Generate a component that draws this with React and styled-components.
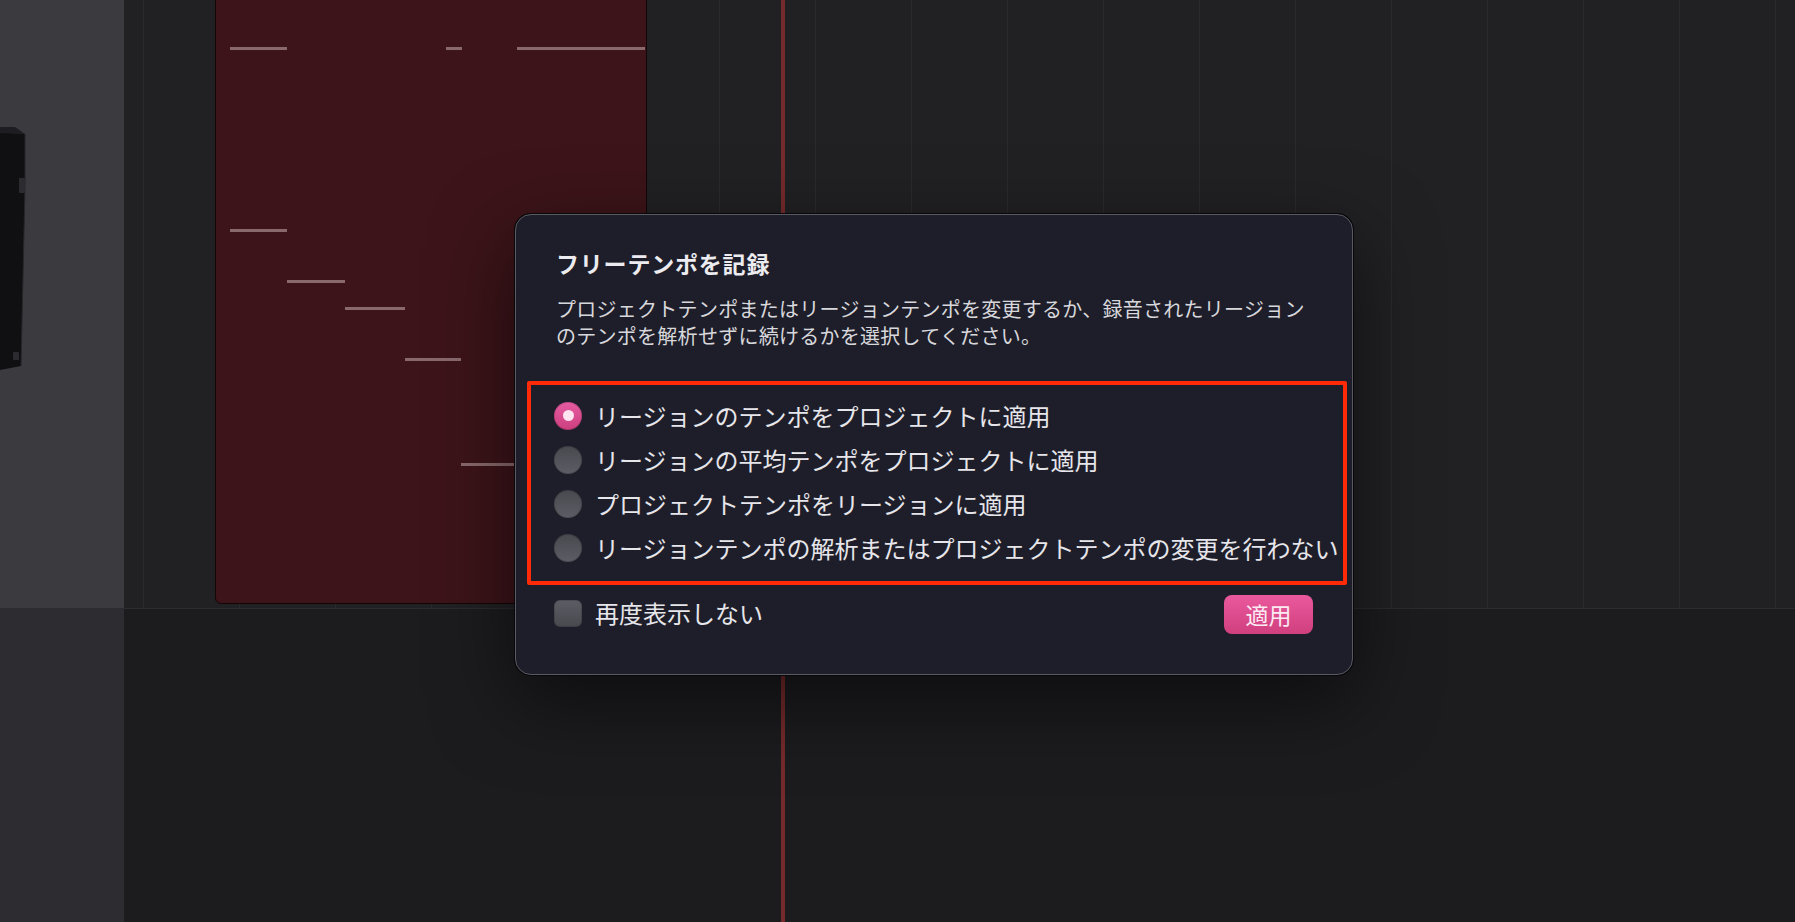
import React from 'react';
import styled, { createGlobalStyle } from 'styled-components';

const GlobalStyle = createGlobalStyle`
  html, body {
    margin: 0;
    padding: 0;
    background: #1c1c20;
    overflow: hidden;
  }
  body {
    font-family: "Noto Sans CJK JP", "Noto Sans", sans-serif;
    -webkit-font-smoothing: antialiased;
  }
`;

const Page = styled.div`
  position: relative;
  display: grid;
  grid-template-rows: 608px 1fr;
  width: 100vw;
  height: 100vh;
  overflow: hidden;
`;

const TrackRow = styled.div`
  display: grid;
  grid-template-columns: 124px 1fr;
  min-height: 0;
`;

const LowerRow = styled.div`
  display: grid;
  grid-template-columns: 124px 1fr;
  border-top: 1px solid #2b2b30;
`;

const Sidebar = styled.div`
  display: flex;
  flex-direction: column;
  padding-top: ${p => (p.$lower ? 0 : 126)}px;
  background: ${p => (p.$lower ? '#2d2d31' : '#3b3a3f')};
  overflow: hidden;
`;

const Arrange = styled.div`
  position: relative;
  overflow: hidden;
  background-color: #212124;
  background-image: linear-gradient(to right, #2a2a2e 1px, transparent 1px);
  background-size: 96px 100%;
  background-position: 19px 0;
`;

const LowerLane = styled.div`
  background: #1c1c1f;
`;

const Region = styled.div`
  position: absolute;
  left: 91px;
  top: -8px;
  width: 432px;
  height: 612px;
  box-sizing: border-box;
  background: #3c1419;
  border: 1px solid #140607;
  border-radius: 0 0 6px 6px;
`;

const Note = styled.span`
  position: absolute;
  height: 3px;
  background: #8a696d;
`;

const Playhead = styled.div`
  position: absolute;
  left: 781px;
  top: 0;
  bottom: 0;
  width: 4px;
  background: #762a2b;
`;

const Dialog = styled.div`
  position: absolute;
  left: 515px;
  top: 214px;
  width: 838px;
  height: 461px;
  box-sizing: border-box;
  display: flex;
  flex-direction: column;
  background: #1e1e2a;
  border: 1px solid #5a5a62;
  border-radius: 16px;
  box-shadow: 0 0 0 1px #08080a, 0 26px 80px rgba(0, 0, 0, 0.55);
  color: #e6e6ea;
`;

const Header = styled.div`
  padding: 33px 40px 0;
`;

const Title = styled.h2`
  margin: 0;
  font-size: 23px;
  line-height: 30px;
  font-weight: 700;
  letter-spacing: 0.8px;
  color: #ececf0;
`;

const Description = styled.p`
  margin: 17px 0 0;
  width: 762px;
  font-size: 20px;
  line-height: 27px;
  letter-spacing: 0.27px;
  color: #d8d8dc;
`;

const Choices = styled.div`
  margin: 32px 5px 0 11px;
  padding: 8px 0 12px 23px;
  border: 4px solid #ff2a08;
  border-radius: 2px;
  display: flex;
  flex-direction: column;
`;

const Choice = styled.label`
  display: flex;
  align-items: center;
  gap: 13px;
  height: 44px;
  font-size: 24px;
  color: #e6e6ea;
  white-space: nowrap;
`;

const Radio = styled.span`
  flex: none;
  display: flex;
  align-items: center;
  justify-content: center;
  width: 28px;
  height: 28px;
  margin-top: 1px;
  border-radius: 50%;
  background: ${p =>
    p.$on
      ? 'linear-gradient(#e65ca2, #cc3f7e)'
      : 'linear-gradient(#48484f, #5d5d65)'};
  box-shadow: inset 0 0 0 1px rgba(0, 0, 0, 0.15);

  &::after {
    content: '';
    display: ${p => (p.$on ? 'block' : 'none')};
    width: 11px;
    height: 11px;
    border-radius: 50%;
    background: #fde4f0;
  }
`;

const Footer = styled.div`
  margin-top: 8px;
  height: 40px;
  padding: 0 39px 0 38px;
  display: flex;
  align-items: center;
  justify-content: space-between;
`;

const CheckLabel = styled.label`
  display: flex;
  align-items: center;
  gap: 13px;
  font-size: 24px;
  line-height: 34px;
  color: #e6e6ea;
`;

const Checkbox = styled.span`
  width: 28px;
  height: 27px;
  margin-top: 1px;
  border-radius: 6px;
  background: linear-gradient(#5c5c64, #48484f);
  box-shadow: inset 0 0 0 1px rgba(0, 0, 0, 0.15);
`;

const ApplyButton = styled.button`
  width: 89px;
  height: 39px;
  margin-top: 3px;
  border: none;
  border-radius: 8px;
  background: linear-gradient(#ea599d, #d0407f);
  color: #fbeaf2;
  font-family: inherit;
  font-size: 23px;
  line-height: 39px;
  padding: 0;
  cursor: pointer;
`;

const notes = [
  { x: 14, y: 54, w: 57 },
  { x: 230, y: 54, w: 16 },
  { x: 301, y: 54, w: 128 },
  { x: 14, y: 236, w: 57 },
  { x: 71, y: 287, w: 58 },
  { x: 129, y: 314, w: 60 },
  { x: 189, y: 365, w: 56 },
  { x: 245, y: 470, w: 56 },
];

const choices = [
  'リージョンのテンポをプロジェクトに適用',
  'リージョンの平均テンポをプロジェクトに適用',
  'プロジェクトテンポをリージョンに適用',
  'リージョンテンポの解析またはプロジェクトテンポの変更を行わない',
];

// amp cabinet thumbnail peeking in from the track header
const InstrumentArt = () => (
  <svg width="28" height="246" viewBox="0 0 28 246">
    <path d="M0 6 L25 8 L25 62 L21 240 L0 244 Z" fill="#101013" />
    <path d="M0 1 L15 1 L25 8 L0 7 Z" fill="#1e1e22" />
    <path d="M25 8 L25 62 L21 240" stroke="#27272b" strokeWidth="1" fill="none" />
    <rect x="19" y="52" width="6" height="15" rx="1" fill="#2c2c30" />
    <rect x="13" y="226" width="6" height="8" rx="1" fill="#2c2c30" />
  </svg>
);

export default function App() {
  const selected = 0;
  return (
    <Page>
      <GlobalStyle />
      <TrackRow>
        <Sidebar>
          <InstrumentArt />
        </Sidebar>
        <Arrange>
          <Region>
            {notes.map((n, i) => (
              <Note key={i} style={{ left: n.x, top: n.y, width: n.w }} />
            ))}
          </Region>
        </Arrange>
      </TrackRow>
      <LowerRow>
        <Sidebar $lower />
        <LowerLane />
      </LowerRow>
      <Playhead />

      <Dialog>
        <Header>
          <Title>フリーテンポを記録</Title>
          <Description>
            プロジェクトテンポまたはリージョンテンポを変更するか、録音されたリージョンのテンポを解析せずに続けるかを選択してください。
          </Description>
        </Header>
        <Choices>
          {choices.map((c, i) => (
            <Choice key={i}>
              <Radio $on={i === selected} />
              {c}
            </Choice>
          ))}
        </Choices>
        <Footer>
          <CheckLabel>
            <Checkbox />
            再度表示しない
          </CheckLabel>
          <ApplyButton>適用</ApplyButton>
        </Footer>
      </Dialog>
    </Page>
  );
}
